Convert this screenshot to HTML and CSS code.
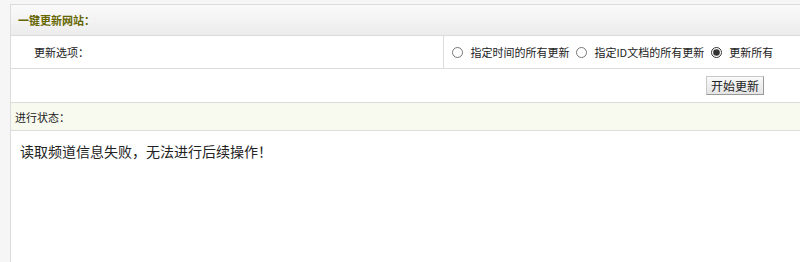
FILE: index.html
```html
<!DOCTYPE html>
<html lang="zh-CN">
<head>
  <meta charset="UTF-8" />
  <title>一键更新网站</title>
  <link rel="stylesheet" href="styles.css">
</head>
<body>

<div class="main">
  <table class="tb" cellspacing="0" cellpadding="0">
    <tr class="tb-head">
      <td colspan="2">一键更新网站：</td>
    </tr>
    <tr class="tb-row">
      <td class="lbl">更新选项：</td>
      <td class="opts">
        <label><input type="radio" name="uptype" /> 指定时间的所有更新</label>
        <label><input type="radio" name="uptype" /> 指定ID文档的所有更新</label>
        <label><input type="radio" name="uptype" checked /> 更新所有</label>
      </td>
    </tr>
    <tr class="tb-row">
      <td colspan="2" class="act"><button type="button" class="btn">开始更新</button></td>
    </tr>
    <tr class="tb-status">
      <td colspan="2">进行状态：</td>
    </tr>
    <tr>
      <td colspan="2" class="msg">读取频道信息失败，无法进行后续操作！</td>
    </tr>
  </table>
</div>

</body>
</html>
```

FILE: styles.css
```css
body {
  margin: 0;
  padding: 4px 0 0 10px;
  background-color: #f6f6f6;
  font-family: "Noto Sans CJK SC", "Liberation Sans", sans-serif;
  font-size: 11px;
  color: #222;
}

.main {
  background-color: #fff;
  border-left: 1px solid #dcdcdc;
  border-top: 1px solid #dcdcdc;
  height: 258px;
}

.tb {
  width: 100%;
  border-collapse: collapse;
}

.tb td {
  padding: 0;
}

.tb-head td {
  height: 30px;
  padding-left: 7px;
  background: linear-gradient(#fafafa, #ececec);
  border-bottom: 1px solid #dcdcdc;
  color: #666600;
  font-weight: bold;
}

.tb-row td {
  height: 32px;
  border-bottom: 1px solid #dcdcdc;
}

.tb-row.last td {
  height: 33px;
}

.lbl {
  width: 409px;
  padding-left: 23px !important;
  border-right: 1px solid #dcdcdc;
}

.opts {
  padding-left: 8px !important;
}

.opts label {
  margin-right: 4px;
}

.opts input {
  margin: 0 5px 0 0;
  width: 11px;
  height: 11px;
  vertical-align: -1px;
  accent-color: #333;
}

.act {
  height: 33px !important;
  text-align: right;
  padding-right: 36px !important;
}

.btn {
  font-family: inherit;
  font-size: 12px;
  width: 58px;
  padding: 0;
  height: 19px;
  border: 1px solid #c8c8c8;
  border-right-color: #999;
  border-bottom-color: #999;
  background: linear-gradient(#fafafa, #e4e4e4);
  color: #222;
}

.tb-status td {
  height: 27px;
  padding-left: 4px;
  background-color: #f9faef;
  border-bottom: 1px solid #dcdcdc;
}

.msg {
  padding: 10px 0 0 9px !important;
  font-size: 14px;
  vertical-align: top;
}
```
